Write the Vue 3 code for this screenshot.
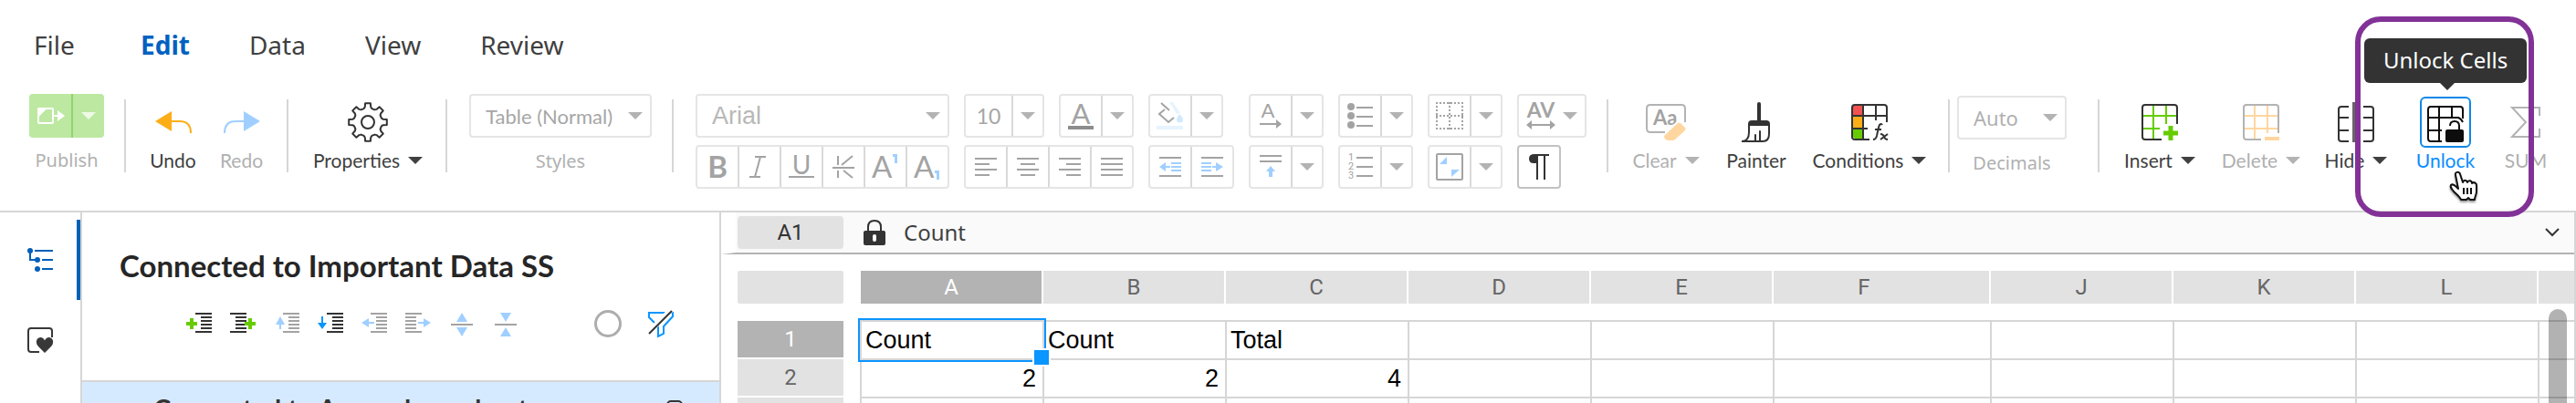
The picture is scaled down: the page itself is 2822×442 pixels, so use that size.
<script setup>
import { ref } from 'vue'

const menus = ['File', 'Edit', 'Data', 'View', 'Review']
const activeMenu = ref('Edit')

const columns = [
  { name: 'A', kind: 'std' },
  { name: 'B', kind: 'std' },
  { name: 'C', kind: 'std' },
  { name: 'D', kind: 'std' },
  { name: 'E', kind: 'std' },
  { name: 'F', kind: 'wide' },
  { name: 'J', kind: 'std' },
  { name: 'K', kind: 'std' },
  { name: 'L', kind: 'std' },
  { name: '', kind: 'rest' },
]
const rows = [
  { n: 1, cells: ['Count', 'Count', 'Total'] },
  { n: 2, cells: ['2', '2', '4'] },
  { n: '', cells: [] },
]

const aligns = [
  { name: 'Align left', xs: [0, 0, 0, 0], short: 16 },
  { name: 'Align center', xs: [0, 4, 0, 4], short: 16 },
  { name: 'Align right', xs: [0, 8, 0, 8], short: 16 },
  { name: 'Justify', xs: [0, 0, 0, 0], short: 24 },
]

const outline = [
  { name: 'Add before', side: 'right', mark: 'plus' },
  { name: 'Add after', side: 'left', mark: 'plus' },
  { name: 'Move up', side: 'right', mark: 'up', off: true },
  { name: 'Move down', side: 'right', mark: 'down' },
  { name: 'Promote', side: 'right', mark: 'left', off: true },
  { name: 'Demote', side: 'left', mark: 'right', off: true },
]
const lineX = (item, i) => {
  const edge = i === 0 || i === 5
  if (item.side === 'right') return edge ? 10 : 16
  return !edge && item.mark === 'plus' ? 6 : 0
}
const lineW = (i) => (i === 0 || i === 5 ? 18 : 12)

// Eight-toothed gear around (22, 22)
const gear = (() => {
  const pts = []
  const at = (deg, r) => {
    const a = (deg * Math.PI) / 180
    pts.push(`${(22 + r * Math.sin(a)).toFixed(1)} ${(22 - r * Math.cos(a)).toFixed(1)}`)
  }
  for (let k = 0; k < 8; k++) {
    const c = k * 45
    at(c - 16, 15.5)
    at(c - 11, 17)
    at(c - 8, 21)
    at(c + 8, 21)
    at(c + 11, 17)
    at(c + 16, 15.5)
  }
  return `M${pts.join('L')}Z`
})()
</script>

<template>
  <div class="app">
    <header class="ribbon">
      <nav class="menu">
        <a v-for="m in menus" :key="m" href="#" :class="{ active: m === activeMenu }" @click.prevent="activeMenu = m">{{ m }}</a>
      </nav>

      <div class="tools">
        <div class="item publish">
          <div class="publish-split">
            <button aria-label="Publish document">
              <svg width="30" height="18" viewBox="0 0 30 18">
                <path d="M1 9L9 1H16Q17 1 17 2V16Q17 17 16 17H2Q1 17 1 16Z" fill="none" stroke="#fff" stroke-width="2" />
                <path d="M0 10V1Q0 0 1 0H10Z M22 3L30 9L22 15Z" fill="#fff" />
                <path d="M17 9H23" stroke="#fff" stroke-width="2" />
              </svg>
            </button>
            <button aria-label="Publish options"><i class="caret white"></i></button>
          </div>
          <span class="label alt off">Publish</span>
        </div>
        <span class="sep"></span>

        <div class="pair">
          <button class="item">
            <span class="slot"><svg width="40" height="24" viewBox="0 0 40 24"><path d="M0 11L18 0V22Z" fill="#fdae17" /><path d="M17 11H27Q39 11 39 24" fill="none" stroke="#fdae17" stroke-width="2" /></svg></span>
            <span class="label">Undo</span>
          </button>
          <button class="item">
            <span class="slot"><svg width="40" height="24" viewBox="0 0 40 24"><path d="M40 11L22 0V22Z" fill="#a0cfff" /><path d="M23 11H13Q1 11 1 24" fill="none" stroke="#a0cfff" stroke-width="2" /></svg></span>
            <span class="label off">Redo</span>
          </button>
        </div>
        <span class="sep"></span>

        <button class="item properties">
          <span class="slot">
            <svg width="44" height="44" viewBox="0 0 44 44" fill="none" stroke="#333" stroke-width="2" stroke-linejoin="round"><path :d="gear" /><circle cx="22" cy="22" r="7" /></svg>
          </span>
          <span class="label">Properties<i class="caret dark"></i></span>
        </button>
        <span class="sep"></span>

        <div class="item styles">
          <div class="select">
            <select id="styles"><option>Table (Normal)</option></select>
            <i class="caret"></i>
          </div>
          <label class="label alt off" for="styles">Styles</label>
        </div>
        <span class="sep"></span>

        <div class="format">
          <div class="fcol">
            <div class="select font">
              <select aria-label="Font"><option>Arial</option></select>
              <i class="caret"></i>
            </div>
            <div class="bar">
              <button aria-label="Bold"><svg width="30" height="30" viewBox="0 0 30 30"><text x="15" y="27" text-anchor="middle" class="glyph heavy" font-size="33">B</text></svg></button>
              <button aria-label="Italic"><svg width="30" height="30" viewBox="0 0 30 30"><path d="M10 4H22M4 26H16M16 4L10 26" fill="none" stroke="#a3a3a3" stroke-width="2" /></svg></button>
              <button aria-label="Underline"><svg width="30" height="30" viewBox="0 0 30 30"><text x="15" y="23" text-anchor="middle" class="glyph" font-size="28">U</text><path d="M1 26H29" stroke="#a3a3a3" stroke-width="2" /></svg></button>
              <button aria-label="Strikethrough"><svg width="30" height="30" viewBox="0 0 30 30"><path d="M3 16H27M9 3V13M9 19V27M25 3L13 13M15 19L25 27" fill="none" stroke="#a3a3a3" stroke-width="2" /></svg></button>
              <button aria-label="Superscript"><svg width="34" height="30" viewBox="0 0 34 30"><text x="2" y="27" class="glyph" font-size="33">A</text><path d="M25 2.500H28.500V11" fill="none" stroke="#a0cfff" stroke-width="3" /></svg></button>
              <button aria-label="Subscript"><svg width="34" height="30" viewBox="0 0 34 30"><text x="2" y="27" class="glyph" font-size="33">A</text><path d="M25 20.500H28.500V29" fill="none" stroke="#a0cfff" stroke-width="3" /></svg></button>
            </div>
          </div>

          <div class="fcol">
            <div class="frow">
              <div class="bar size">
                <input aria-label="Font size" value="10" />
                <button aria-label="Font sizes"><i class="caret"></i></button>
              </div>
              <div class="bar split">
                <button aria-label="Text color"><svg width="28" height="30" viewBox="0 0 28 30"><text x="14" y="24" text-anchor="middle" class="glyph" font-size="31">A</text><rect y="26" width="28" height="4" fill="#8c8c8c" /></svg></button>
                <button aria-label="Text colors"><i class="caret"></i></button>
              </div>
            </div>
            <div class="bar">
              <button v-for="a in aligns" :key="a.name" :aria-label="a.name">
                <svg width="24" height="20" viewBox="0 0 24 20"><rect v-for="(x, i) in a.xs" :key="i" :x="x" :y="i * 6" :width="i % 2 ? a.short : 24" height="2" fill="#a3a3a3" /></svg>
              </button>
            </div>
          </div>

          <div class="fcol start">
            <div class="bar split">
              <button aria-label="Fill color">
                <svg width="30" height="30" viewBox="0 0 30 30">
                  <path d="M5 1L14 9M9 8L3 13L13 22L19 17" fill="none" stroke="#a3a3a3" stroke-width="2" />
                  <path d="M14 0H18L26 12L22 13Z" fill="#e5f4ff" /><path d="M25 13Q29 17 29 19A3 3 0 0 1 22 19Q22 17 25 13Z" fill="#d0e9ff" />
                  <rect y="26" width="29" height="4" fill="#e5f4ff" />
                </svg>
              </button>
              <button aria-label="Fill colors"><i class="caret"></i></button>
            </div>
            <div class="bar">
              <button aria-label="Decrease indent"><svg width="24" height="22" viewBox="0 0 24 22"><path d="M0 1H24M0 21H24" stroke="#a3a3a3" stroke-width="2" /><path d="M13 7H24M13 11H24M13 15H24M6 11H12" stroke="#a0cfff" stroke-width="2" /><path d="M0 11L7 6V16Z" fill="#a0cfff" /></svg></button>
              <button aria-label="Increase indent"><svg width="24" height="22" viewBox="0 0 24 22"><path d="M0 1H24M0 21H24" stroke="#a3a3a3" stroke-width="2" /><path d="M0 7H11M0 11H11M0 15H11M12 11H18" stroke="#a0cfff" stroke-width="2" /><path d="M24 11L16 6V16Z" fill="#a0cfff" /></svg></button>
            </div>
          </div>

          <div class="fcol">
            <div class="bar split">
              <button aria-label="Text direction"><svg width="24" height="28" viewBox="0 0 24 28"><text x="9" y="16" text-anchor="middle" class="glyph" font-size="22">A</text><path d="M0 23H19" stroke="#a3a3a3" stroke-width="2" /><path d="M24 23L18 18V28Z" fill="#a3a3a3" /></svg></button>
              <button aria-label="Text directions"><i class="caret"></i></button>
            </div>
            <div class="bar split">
              <button aria-label="Vertical align"><svg width="24" height="26" viewBox="0 0 24 26"><path d="M0 1H24M0 7H24" stroke="#a3a3a3" stroke-width="2" /><path d="M12 12L17 18H14V24H10V18H7Z" fill="#a0cfff" /></svg></button>
              <button aria-label="Vertical alignments"><i class="caret"></i></button>
            </div>
          </div>

          <div class="fcol">
            <div class="bar split">
              <button aria-label="Bullets"><svg width="28" height="28" viewBox="0 0 28 28" fill="#a3a3a3"><g v-for="y in [4, 14, 24]" :key="y"><circle cx="4" :cy="y" r="4" /><rect x="10" :y="y" width="18" height="2" /></g></svg></button>
              <button aria-label="Bullet styles"><i class="caret"></i></button>
            </div>
            <div class="bar split">
              <button aria-label="Numbering"><svg width="28" height="30" viewBox="0 0 28 30"><g v-for="n in 3" :key="n"><text x="1" :y="n * 10 - 2" class="glyph num" font-size="11">{{ n }}</text><rect x="10" :y="n * 10 - 6" width="18" height="2" fill="#a3a3a3" /></g></svg></button>
              <button aria-label="Number styles"><i class="caret"></i></button>
            </div>
          </div>

          <div class="fcol">
            <div class="bar split">
              <button aria-label="Borders"><svg width="30" height="30" viewBox="0 0 30 30"><path d="M0 1H30M0 15H30M0 29H30M1 0V30M15 0V30M29 0V30" stroke="#a3a3a3" stroke-width="2" stroke-dasharray="2 2" /></svg></button>
              <button aria-label="Border styles"><i class="caret"></i></button>
            </div>
            <div class="bar split">
              <button aria-label="Cell size"><svg width="30" height="30" viewBox="0 0 30 30"><rect x="1" y="1" width="28" height="28" rx="1" fill="none" stroke="#a3a3a3" stroke-width="2" /><path d="M4 12L12 4V12ZM17 18H26L17 26Z" fill="#a0cfff" /></svg></button>
              <button aria-label="Cell sizes"><i class="caret"></i></button>
            </div>
          </div>

          <div class="fcol start">
            <div class="bar spacing">
              <button aria-label="Character spacing">
                <svg width="32" height="30" viewBox="0 0 32 30"><text x="16" y="17" text-anchor="middle" class="glyph heavy" font-size="23">AV</text><path d="M5 25H27" stroke="#a3a3a3" stroke-width="2" /><path d="M0 25L6 20V30ZM32 25L26 20V30Z" fill="#a3a3a3" /></svg>
                <i class="caret"></i>
              </button>
            </div>
            <div class="bar pilcrow">
              <button aria-label="Show marks"><svg width="22" height="28" viewBox="0 0 22 28" fill="#333"><path d="M22 0H6Q0 0 0 5Q0 10 5 10H8V28H10V2H16V28H18V2H22Z" /></svg></button>
            </div>
          </div>
        </div>
        <span class="sep"></span>

        <div class="cluster">
          <button class="item clear">
            <span class="slot">
              <svg width="44" height="40" viewBox="0 0 44 40">
                <path d="M21 31H5Q1 31 1 27V5Q1 1 5 1H39Q43 1 43 5V20" fill="none" stroke="#b3b3b3" stroke-width="2" />
                <text x="8" y="23" class="glyph heavy" font-size="22">Aa</text>
                <path d="M19 34L35 18L44 26L46 30L31 42H19Z" fill="#fff" /><path d="M20 35L35 21Q36.500 20 38 21L43 26Q44.500 27.500 43 29L32 39Q31 40 29 40H24Q20 39 20 35Z" fill="#ffd6a0" />
              </svg>
            </span>
            <span class="label off">Clear<i class="caret"></i></span>
          </button>
          <button class="item painter">
            <span class="slot">
              <svg width="34" height="44" viewBox="0 0 34 44">
                <path d="M20 2V22" stroke="#333" stroke-width="4" stroke-linecap="round" />
                <path d="M8 26V24Q8 20 12 20H28Q32 20 32 24V26Z" fill="#333" />
                <path d="M9 25V33Q9 43 1 43H24Q31 43 31 35V25M16 36V43M21 32V43" fill="none" stroke="#333" stroke-width="2" stroke-linecap="round" />
              </svg>
            </span>
            <span class="label">Painter</span>
          </button>
          <button class="item conditions">
            <span class="slot">
              <svg width="40" height="40" viewBox="0 0 40 40">
                <path d="M2 2H13V13H2Z" fill="#f25252" /><path d="M2 14H13V27H2Z" fill="#fdae17" /><path d="M2 28H13V38H4L2 36Z" fill="#66cc00" />
                <path d="M39 20V4Q39 1 36 1H4Q1 1 1 4V36Q1 39 4 39H20M13 1V39M27 1V18M1 13H39M1 27H18" fill="none" stroke="#333" stroke-width="2" />
                <path d="M34 23Q33 21 31 23Q30 25 28 35Q27 39 24 39M26 28H33" fill="none" stroke="#333" stroke-width="2" />
                <path d="M32 33Q35 33 36 36T40 39M40 33L32 39" fill="none" stroke="#333" stroke-width="2" />
              </svg>
            </span>
            <span class="label">Conditions<i class="caret dark"></i></span>
          </button>
        </div>
        <span class="sep tight"></span>

        <div class="item decimals">
          <div class="select">
            <select id="decimals"><option>Auto</option></select>
            <i class="caret"></i>
          </div>
          <label class="label alt off" for="decimals">Decimals</label>
        </div>
        <span class="sep"></span>

        <div class="cluster cells">
          <button class="item insert">
            <span class="slot">
              <svg width="40" height="40" viewBox="0 0 40 40" fill="none" stroke-width="2">
                <path d="M13 2V38M27 2V22M2 13H38M2 27H20" stroke="#66cc00" />
                <path d="M39 22V4Q39 1 36 1H4Q1 1 1 4V36Q1 39 4 39H22" stroke="#333" />
                <path d="M32 24V40M24 32H40" stroke="#66cc00" stroke-width="5" />
              </svg>
            </span>
            <span class="label">Insert<i class="caret dark"></i></span>
          </button>
          <button class="item delete">
            <span class="slot">
              <svg width="40" height="40" viewBox="0 0 40 40" fill="none" stroke-width="2">
                <path d="M13 2V38M27 2V32M2 13H38M2 27H38" stroke="#ffd6a0" />
                <path d="M39 32V4Q39 1 36 1H4Q1 1 1 4V36Q1 39 4 39H20" stroke="#b3b3b3" />
                <path d="M24 38H40" stroke="#ffd6a0" stroke-width="4" />
              </svg>
            </span>
            <span class="label off">Delete<i class="caret"></i></span>
          </button>
          <button class="item hide">
            <span class="slot">
              <svg width="40" height="44" viewBox="0 0 40 44" fill="none" stroke="#333" stroke-width="2">
                <path d="M12 5H4Q1 5 1 8V40Q1 43 4 43H12M1 17H12M1 31H12M28 5H36Q39 5 39 8V40Q39 43 36 43H28M39 17H28M39 31H28" />
                <path d="M18 0V44" stroke="#666" stroke-width="4" />
              </svg>
            </span>
            <span class="label">Hide<i class="caret dark"></i></span>
          </button>
          <div class="unlock">
            <button class="item" aria-describedby="unlock-tip">
              <span class="slot">
                <span class="ring">
                  <svg width="40" height="40" viewBox="0 0 40 40" fill="none" stroke="#0d0d0d" stroke-width="2">
                    <path d="M39 18Q37 14 34 13H1M39 14V4Q39 1 36 1H4Q1 1 1 4V36Q1 39 4 39H16M13 1V39M27 1V13M1 27H16" />
                    <path d="M25 22Q25 17 30 17T35 22V27" />
                    <rect x="20" y="26" width="20" height="14" rx="2" fill="#0d0d0d" stroke="none" />
                  </svg>
                </span>
              </span>
              <span class="label blue">Unlock</span>
            </button>
            <div id="unlock-tip" class="tip" role="tooltip">Unlock Cells</div>
            <div class="callout"></div>
            <svg class="cursor" width="32" height="34" viewBox="0 0 32 34">
              <path d="M6 4C5 0 10 0 11 3L14 12C15 9 18 9 19 12C20 9 24 10 24 13C26 11 29 13 29 15V22C29 26 27 27 27 31H22L20 29L18 31H12C11 28 7 25 4 22C1 18 0 17 1 15C3 13 6 16 9 19Z" fill="#fff" stroke="#111" stroke-width="2" stroke-linejoin="round" />
              <path d="M15 18V25M19 18V25M23 18V25" stroke="#111" stroke-width="2" />
            </svg>
          </div>
          <button class="item sum">
            <span class="slot"><svg width="32" height="34" viewBox="0 0 32 34"><path d="M31 10V1H1L16 17L1 33H31V24" fill="none" stroke="#b3b3b3" stroke-width="2" /></svg></span>
            <span class="label off">SUM</span>
          </button>
        </div>
      </div>
    </header>

    <main class="body">
      <nav class="rail" aria-label="Panels">
        <button class="active" aria-label="Outline">
          <svg width="28" height="26" viewBox="0 0 28 26" fill="#005fb8"><circle cx="3" cy="3" r="3" /><circle cx="11" cy="13" r="3" /><circle cx="11" cy="23" r="3" /><path d="M3 3V13H11M8 3H28M16 13H28M16 23H28" fill="none" stroke="#005fb8" stroke-width="2" /></svg>
        </button>
        <button aria-label="Favorites">
          <svg width="28" height="28" viewBox="0 0 28 28"><path d="M27 11V4Q27 1 24 1H4Q1 1 1 4V24Q1 27 4 27H13" fill="none" stroke="#383838" stroke-width="2" /><path d="M19 28L12 21Q10 19 10 17A4.500 4.500 0 0 1 19 14.500A4.500 4.500 0 0 1 28 17Q28 19 26 21Z" fill="#383838" /></svg>
        </button>
      </nav>

      <aside class="panel">
        <div class="panel-head">
          <h2>Connected to Important Data SS</h2>
          <div class="panel-tools">
            <button v-for="o in outline" :key="o.name" :aria-label="o.name">
              <svg width="28" height="28" viewBox="0 0 28 28">
                <rect v-for="i in 6" :key="i" :x="lineX(o, i - 1)" :y="i * 4 - 3" :width="lineW(i - 1)" height="2" :fill="o.off ? '#a3a3a3' : '#333'" />
                <path v-if="o.mark === 'plus' && o.side === 'right'" d="M0 13H12M6 7V19" stroke="#66cc00" stroke-width="4" />
                <path v-if="o.mark === 'plus' && o.side === 'left'" d="M16 13H28M22 7V19" stroke="#66cc00" stroke-width="4" />
                <path v-if="o.mark === 'up'" d="M7 5L12 14H8V19H6V14H2Z" fill="#a0cfff" />
                <path v-if="o.mark === 'down'" d="M5 19L0 12H4V5H6V12H10Z" fill="#0a95ff" />
                <path v-if="o.mark === 'left'" d="M0 12L8 7V11H14V13H8V17Z" fill="#a0cfff" />
                <path v-if="o.mark === 'right'" d="M28 12L20 7V11H14V13H20V17Z" fill="#a0cfff" />
              </svg>
            </button>
            <button aria-label="Expand"><svg width="28" height="28" viewBox="0 0 28 28"><path d="M14 1L20 11H8ZM14 27L20 17H8Z" fill="#a0cfff" /><path d="M2 14H26" stroke="#a3a3a3" stroke-width="2" /></svg></button>
            <button aria-label="Collapse"><svg width="28" height="28" viewBox="0 0 28 28"><path d="M14 11L20 1H8ZM14 17L20 27H8Z" fill="#a0cfff" /><path d="M2 14H26" stroke="#a3a3a3" stroke-width="2" /></svg></button>
            <button class="circle" aria-label="Status"></button>
            <button aria-label="Clear filter">
              <svg width="28" height="30" viewBox="0 0 28 30" fill="none">
                <path d="M1 3H27V7L17 18V26L11 29V18L1 8Z" stroke="#0a95ff" stroke-width="2" /><path d="M0 25L25 0" stroke="#fff" stroke-width="6" /><path d="M1 26L26 1" stroke="#333" stroke-width="2" />
              </svg>
            </button>
          </div>
        </div>
        <div class="panel-row">
          <span>Connected to Append our sheet</span>
          <svg width="18" height="24" viewBox="0 0 18 24"><rect x="1" y="1" width="16" height="22" rx="4" fill="none" stroke="#333" stroke-width="2" /></svg>
        </div>
      </aside>

      <section class="sheet">
        <div class="formula">
          <span class="ref">A1</span>
          <svg class="lock" width="24" height="28" viewBox="0 0 24 28"><path d="M5 13V8Q5 1 12 1T19 8V13" fill="none" stroke="#333" stroke-width="2" /><rect y="12" width="24" height="16" rx="2" fill="#333" /><rect x="10" y="16" width="4" height="8" rx="2" fill="#fff" /></svg>
          <span class="value">Count</span>
          <button aria-label="Expand formula bar"><svg width="16" height="10" viewBox="0 0 16 10"><path d="M1 1L8 8L15 1" fill="none" stroke="#333" stroke-width="2" /></svg></button>
        </div>
        <div class="grid">
          <table>
            <colgroup>
              <col class="rowhead" />
              <col v-for="(c, i) in columns" :key="i" :class="c.kind" />
            </colgroup>
            <thead>
              <tr>
                <th class="corner"><div></div></th>
                <th v-for="(c, i) in columns" :key="i" :class="[c.kind, { on: i === 0 }]"><div>{{ c.name }}</div></th>
              </tr>
            </thead>
            <tbody>
              <tr v-for="(r, ri) in rows" :key="ri">
                <th :class="{ on: ri === 0 }"><div>{{ r.n }}</div></th>
                <td v-for="(c, ci) in columns" :key="ci" :class="{ number: ri > 0 }">
                  {{ r.cells[ci] }}
                  <span v-if="ri === 0 && ci === 0" class="selection"></span>
                </td>
              </tr>
            </tbody>
          </table>
          <div class="scrollbar"></div>
        </div>
      </section>
    </main>
  </div>
</template>

<style>
body { overflow: hidden; background: #fff; }
</style>

<style scoped>
* { box-sizing: border-box; }
.app { height: 100vh; overflow: hidden; display: flex; flex-direction: column; font-family: Lato, "Open Sans", sans-serif; color: #404040; }
button, input, select { font: inherit; color: inherit; background: none; border: 0; padding: 0; margin: 0; border-radius: 0; appearance: none; outline: 0; }
button { display: flex; align-items: center; justify-content: center; cursor: pointer; }
svg { display: block; flex: none; overflow: visible; }

.ribbon { flex: none; padding-top: 30px; border-bottom: 2px solid #d6d6d6; position: relative; z-index: 1; }
.menu { display: flex; gap: 65px; padding-left: 37px; margin-bottom: 35px; font-family: "Noto Sans", sans-serif; font-size: 28px; line-height: 38px; }
.menu a { color: #404040; text-decoration: none; min-width: 52px; }
.menu a.active { color: #0061c0; font-weight: 700; }

.tools { display: flex; align-items: flex-start; padding: 0 0 24px 32px; white-space: nowrap; }
.sep { flex: none; width: 2px; height: 80px; margin: 6px 24px 0 22px; background: #d6d6d6; }
.sep.tight { margin-right: 8px; }
.item { display: flex; flex-direction: column; align-items: center; justify-content: flex-start; flex: none; }
.slot { height: 61px; display: flex; align-items: center; }
.label { display: flex; align-items: center; gap: 9px; font-size: 21px; line-height: 24px; }
.label.alt { font-family: "Noto Sans", sans-serif; font-size: 20px; }
.label.off { color: #b0b0b0; }
.label.blue { color: #0a8cff; }
.caret { flex: none; width: 0; height: 0; border: 8px solid transparent; border-top-color: #b3b3b3; border-bottom-width: 0; }
.caret.dark { border-top-color: #404040; }
.caret.white { border-top-color: #eefae6; }

.publish-split { display: flex; width: 82px; height: 48px; margin-bottom: 13px; background: #bce8a1; border-radius: 4px; }
.publish-split button { flex: 1; }
.publish-split button:first-child { flex: none; width: 48px; border-right: 2px solid #92d36e; padding-left: 2px; }
.pair { display: flex; gap: 20px; }
.pair .item { width: 55px; }
.properties { width: 126px; }
.select { position: relative; display: flex; align-items: center; width: 100%; height: 48px; border: 2px solid #e5e5e5; border-radius: 4px; margin-bottom: 14px; }
.select select { width: 100%; height: 100%; padding-left: 16px; font-size: 22px; color: #a6a6a6; }
.select .caret { position: absolute; right: 8px; pointer-events: none; }
.styles { width: 200px; }
.decimals { width: 120px; margin-right: 12px; padding-top: 2px; }
.decimals select { font-family: "Noto Sans", sans-serif; color: #b0b0b0; }
.select.font { margin: 0; width: 278px; }
.select.font select { font-family: "Liberation Sans", Arial, sans-serif; font-size: 27px; color: #b8b8b8; }

.format { display: flex; gap: 16px; }
.fcol { display: flex; flex-direction: column; gap: 8px; }
.fcol.start { align-items: flex-start; }
.frow { display: flex; gap: 16px; }
.bar { display: flex; height: 48px; border: 2px solid #e5e5e5; border-radius: 4px; }
.bar button { width: 44px; }
.bar button:not(:first-child) { width: 46px; border-left: 2px solid #d9d9d9; }
.bar.split { width: 82px; }
.bar.split button:last-child, .bar.size button:last-child { width: 34px; }
.bar.size { width: 88px; }
.bar.size input { width: 50px; text-align: center; font-size: 23px; color: #a6a6a6; }
.bar.spacing button { width: 72px; gap: 8px; }
.bar.pilcrow { border-color: #c2c2c2; }
.glyph { fill: #a3a3a3; font-family: Lato, sans-serif; }
.glyph.heavy { font-weight: 700; }
.glyph.num { font-family: Roboto, sans-serif; }

.cluster { display: flex; gap: 26px; }
.cluster.cells { gap: 24px; }
.clear { width: 78px; }
.painter { width: 68px; }
.conditions { width: 128px; }
.insert { width: 84px; }
.delete { width: 90px; }
.hide { width: 70px; }
.sum { width: 50px; }
.unlock { position: relative; width: 78px; }
.unlock .item { width: 100%; }
.ring { width: 56px; height: 56px; border: 2px solid #0f87e8; border-radius: 6px; display: flex; align-items: center; justify-content: center; padding-top: 4px; }
.tip { position: absolute; left: -50px; top: -61px; width: 178px; height: 49px; border-radius: 6px; background: #333; color: #fff; font-family: "Noto Sans", sans-serif; font-size: 24px; line-height: 48px; text-align: center; }
.tip::after { content: ""; position: absolute; left: 83px; top: 100%; border: 8px solid transparent; border-top-color: #333; border-bottom-width: 0; }
.callout { position: absolute; z-index: 2; left: -60px; top: -85px; width: 196px; height: 220px; border: 6px solid #823297; border-radius: 28px; pointer-events: none; }
.cursor { position: absolute; left: 44px; top: 85px; filter: drop-shadow(0 2px 1px rgba(0, 0, 0, 0.4)); }

.body { flex: 1; min-height: 0; display: flex; }
.rail { flex: none; width: 90px; border-right: 2px solid #d6d6d6; padding-top: 8px; }
.rail button { width: 100%; height: 88px; border-right: 4px solid transparent; padding-left: 4px; }
.rail button.active { border-right-color: #0061b8; }
.panel { flex: none; width: 700px; border-right: 2px solid #d6d6d6; }
.panel-head { height: 186px; border-bottom: 2px solid #d6d6d6; padding-top: 38px; }
.panel h2 { margin: 0; padding-left: 41px; font-size: 33px; line-height: 40px; font-weight: 700; color: #262626; }
.panel-tools { display: flex; align-items: flex-end; gap: 20px; height: 30px; margin-top: 29px; padding: 0 50px 0 114px; }
.circle { width: 30px; height: 30px; border: 3px solid #adadad; border-radius: 50%; margin: 0 9px 0 auto; }
.panel-row { display: flex; justify-content: space-between; align-items: flex-start; height: 80px; padding: 9px 40px 0 78px; background: #d6eaff; font-size: 29px; line-height: 40px; font-weight: 700; color: #333; }
.panel-row svg { margin-top: 11px; }

.sheet { flex: 1; min-width: 0; border-right: 2px solid #d6d6d6; }
.formula { display: flex; align-items: center; height: 46px; padding: 0 16px 0 2px; border-bottom: 2px solid #b3b3b3; border-left: 16px solid #fff; background: #fafafa; }
.ref { width: 116px; height: 36px; border-radius: 4px; background: #e2e2e2; text-align: center; font-family: Roboto, sans-serif; font-size: 24px; line-height: 36px; color: #333; }
.lock { margin-left: 22px; }
.value { margin-left: 20px; font-family: "Noto Sans", sans-serif; font-size: 24px; line-height: 36px; }
.formula button { margin-left: auto; height: 36px; }

.grid { position: relative; padding: 18px 0 0 18px; }
table { width: 100%; table-layout: fixed; border-spacing: 0; font-family: "Liberation Sans", Arial, sans-serif; font-size: 27px; color: #000; }
col.rowhead { width: 134px; }
col.std { width: 200px; }
col.wide { width: 238px; }
th { padding: 0; font-family: Roboto, sans-serif; font-size: 24px; font-weight: 400; color: #666; }
th div { background: #e2e2e2; }
th.on div { background: #b3b3b3; color: #fff; }
thead th { padding: 0 1px 18px; }
thead th div { height: 36px; line-height: 36px; }
thead th.wide div { padding-right: 38px; }
thead th.corner { padding: 0 18px 18px 0; }
thead th.corner div { border-radius: 2px; }
thead th.rest { padding-right: 0; }
tbody th { padding: 1px 18px 1px 0; }
tbody th div { height: 40px; line-height: 40px; }
td { position: relative; height: 42px; padding: 0 7px 0 4px; border-top: 2px solid #d6d6d6; border-left: 2px solid #d6d6d6; line-height: 40px; }
td.number { text-align: right; }
.selection { position: absolute; z-index: 1; left: -4px; top: -4px; width: 206px; height: 48px; border: 2px solid #0a95ff; }
.selection::after { content: ""; position: absolute; right: -7px; bottom: -7px; width: 16px; height: 16px; background: #0a95ff; border: 2px solid #fff; }
.scrollbar { position: absolute; z-index: 1; right: 8px; top: 60px; width: 20px; height: 400px; border-radius: 10px; background: rgba(0, 0, 0, 0.3); }
</style>
